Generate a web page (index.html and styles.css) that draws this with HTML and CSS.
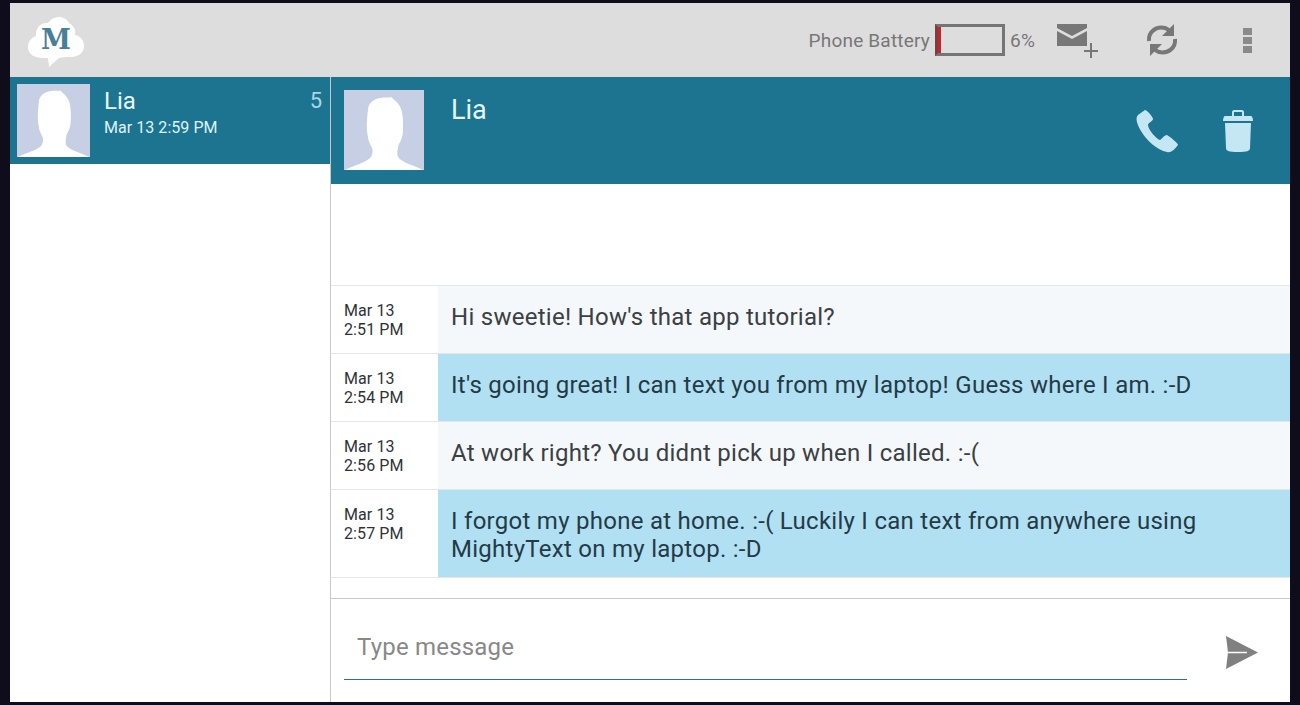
FILE: index.html
```html
<!DOCTYPE html>
<html lang="en">
<head>
    <meta charset="UTF-8">
    <meta name="viewport" content="width=device-width, initial-scale=1.0">
    <title>MightyText</title>
    <link rel="stylesheet" href="styles.css">
</head>
<body>
    <div class="app">
        <div class="topbar">
            <svg class="logo" width="60" height="56" viewBox="0 0 60 56">
                <path class="logo-cloud" d="M17 44C8 44 2 40 2 33C2 28 5 24 10 22C9 14 15 8 22 9C27 1 39 1 43 9C48 12 50 16 49 21C55 22 58 27 58 32C58 39 52 43 45 43C40 43 37 43 33 44L23 53L22 44Z"/>
                <text class="logo-m" x="30" y="35" text-anchor="middle">M</text>
            </svg>
            <div class="status">
                <span class="battery-label">Phone Battery</span>
                <div class="battery"><div class="battery-fill"></div></div>
                <span class="battery-pct">6%</span>
                <svg class="icon-compose" width="44" height="38" viewBox="0 0 44 38">
                    <path d="M1 2H31V6L16 14L1 6Z"/>
                    <path d="M1 9L16 17L31 9V24H1Z"/>
                    <path class="plus" d="M35 21V36M28 29H42"/>
                </svg>
                <svg class="icon-sync" width="32" height="34" viewBox="0 0 32 34">
                    <path class="sync-arc" d="M3 18C2 9 10 3 19 5L23 7"/>
                    <path d="M28 1V13H16Z"/>
                    <path class="sync-arc" d="M29 16C30 25 22 31 13 29L9 27"/>
                    <path d="M4 33V21H16Z"/>
                </svg>
                <div class="more"><i></i><i></i><i></i></div>
            </div>
        </div>
        <div class="main">
            <div class="sidebar">
                <div class="contact">
                    <svg class="avatar avatar-small" viewBox="0 0 80 80">
                        <rect width="80" height="80" fill="#c6cfe3"/>
                        <path fill="#fff" d="M1 80C10 75 22 73 27 67C29 63 29 60 28 58C26 54 24 50 24 47C22 38 23 28 24 20C24 13 30 9 36 8C40 7 46 8 48 7C48 9 52 10 55 15C58 19 59 26 59 34C59 40 59 44 58 47C57 52 54 54 54 58C53 62 53 64 54 67C58 73 70 75 79 80Z"/>
                    </svg>
                    <div class="contact-info">
                        <div class="contact-name">Lia</div>
                        <div class="contact-time">Mar 13 2:59 PM</div>
                    </div>
                    <div class="contact-count">5</div>
                </div>
            </div>
            <div class="thread">
                <div class="thread-head">
                    <svg class="avatar avatar-big" viewBox="0 0 80 80">
                        <rect width="80" height="80" fill="#c6cfe3"/>
                        <path fill="#fff" d="M1 80C10 75 22 73 27 67C29 63 29 60 28 58C26 54 24 50 24 47C22 38 23 28 24 20C24 13 30 9 36 8C40 7 46 8 48 7C48 9 52 10 55 15C58 19 59 26 59 34C59 40 59 44 58 47C57 52 54 54 54 58C53 62 53 64 54 67C58 73 70 75 79 80Z"/>
                    </svg>
                    <div class="thread-name">Lia</div>
                    <svg class="icon-call" width="44" height="44" viewBox="0 0 44 44">
                        <path d="M10 1L3 6C0 9 2 15 6 22C12 32 22 41 32 43C36 44 39 41 43 36C43 34 34 27 32 26C29 26 27 30 25 31C21 30 13 20 13 16C13 14 18 12 18 10C18 8 12 1 10 1Z"/>
                    </svg>
                    <svg class="icon-trash" width="32" height="44" viewBox="0 0 32 44">
                        <path d="M10 7V3C10 2 11 1 12 1H20C21 1 22 2 22 3V7H29C30 7 31 9 31 12H1C1 9 2 7 3 7ZM12 7H20V3H12Z"/>
                        <path d="M3 14H29L28 39C28 42 25 43 16 43C7 43 4 42 4 39Z"/>
                    </svg>
                </div>
                <div class="messages">
                    <div class="message">
                        <div class="message-time">Mar 13<br>2:51 PM</div>
                        <div class="message-text">Hi sweetie! How's that app tutorial?</div>
                    </div>
                    <div class="message message-out">
                        <div class="message-time">Mar 13<br>2:54 PM</div>
                        <div class="message-text">It's going great! I can text you from my laptop! Guess where I am. :-D</div>
                    </div>
                    <div class="message">
                        <div class="message-time">Mar 13<br>2:56 PM</div>
                        <div class="message-text">At work right? You didnt pick up when I called. :-(</div>
                    </div>
                    <div class="message message-out message-tall">
                        <div class="message-time">Mar 13<br>2:57 PM</div>
                        <div class="message-text">I forgot my phone at home. :-( Luckily I can text from anywhere using MightyText on my laptop. :-D</div>
                    </div>
                </div>
                <div class="composer">
                    <div class="composer-input">Type message</div>
                    <svg class="icon-send" width="34" height="34" viewBox="0 0 34 34">
                        <path d="M1 0L33 16.500L1 33L3 16.500Z"/>
                        <path class="send-line" d="M3 16.500H22"/>
                    </svg>
                </div>
            </div>
        </div>
    </div>
</body>
</html>
```

FILE: styles.css
```css
html, body {
    height: 100%;
}
body {
    margin: 0;
    background-color: #0f0d1c;
    font-family: Roboto, 'Liberation Sans', sans-serif;
    overflow: hidden;
}
.app {
    box-sizing: border-box;
    width: 1280px;
    height: 699px;
    margin: 3px 0 0 10px;
    background-color: #fff;
    display: flex;
    flex-direction: column;
}
.topbar {
    height: 74px;
    flex: none;
    background-color: #dedddd;
    display: flex;
    align-items: center;
    justify-content: space-between;
}
.logo {
    margin: 4px 0 0 16px;
}
.logo-cloud {
    fill: #fff;
}
.logo-m {
    font-family: 'DejaVu Serif', 'Liberation Serif', serif;
    font-weight: bold;
    font-size: 27px;
    fill: #4a7f98;
}
.status {
    display: flex;
    align-items: center;
    color: #777;
    font-size: 19px;
    letter-spacing: 0.2px;
}
.battery-label {
    margin-right: 5px;
}
.battery {
    box-sizing: border-box;
    width: 70px;
    height: 32px;
    border: 3px solid #757575;
    border-left-color: #7a3f45;
    margin-right: 5px;
}
.battery-fill {
    width: 3px;
    height: 100%;
    background-color: #c8232c;
}
.battery-pct {
    margin-right: 21px;
}
.icon-compose {
    fill: #777;
    margin: 2px 46px 0 0;
}
.plus {
    fill: none;
    stroke: #777;
    stroke-width: 2;
}
.icon-sync {
    fill: #777;
    margin-right: 65px;
}
.sync-arc {
    fill: none;
    stroke: #777;
    stroke-width: 4;
}
.more {
    display: flex;
    flex-direction: column;
    gap: 2px;
    margin-right: 38px;
}
.more i {
    display: block;
    width: 9px;
    height: 7px;
    background-color: #8a8a8a;
}
.main {
    flex: 1;
    display: flex;
    min-height: 0;
}
.sidebar {
    width: 320px;
    flex: none;
    border-right: 1px solid #c8c8c8;
}
.contact {
    height: 87px;
    background-color: #1c7490;
    display: flex;
    align-items: flex-start;
    color: #fff;
}
.avatar {
    display: block;
    flex: none;
}
.avatar-small {
    width: 73px;
    height: 73px;
    margin: 7px 14px 0 7px;
}
.contact-info {
    flex: 1;
    padding-top: 10px;
}
.contact-name {
    font-size: 24px;
    line-height: 29px;
    color: #e6f7fb;
}
.contact-time {
    font-size: 16px;
    line-height: 24px;
    letter-spacing: 0.05px;
    color: #dff3f8;
}
.contact-count {
    font-size: 22px;
    line-height: 26px;
    margin: 11px 8px 0 0;
    color: #a9d6e4;
}
.thread {
    flex: 1;
    display: flex;
    flex-direction: column;
    min-width: 0;
}
.thread-head {
    height: 107px;
    flex: none;
    background-color: #1c7490;
    display: flex;
    align-items: flex-start;
}
.avatar-big {
    width: 80px;
    height: 80px;
    margin: 13px 27px 0 13px;
}
.thread-name {
    flex: 1;
    font-size: 27px;
    line-height: 32px;
    padding-top: 17px;
    color: #e6f7fb;
}
.icon-call {
    fill: #c5e6f3;
    margin: 32px 43px 0 0;
}
.icon-trash {
    fill: #c5e6f3;
    margin: 32px 36px 0 0;
}
.messages {
    margin-top: 101px;
    border-top: 1px solid #e4e6e8;
}
.message {
    display: flex;
    height: 67px;
    border-bottom: 1px solid #e4e6e8;
}
.message-tall {
    height: 87px;
}
.message-time {
    box-sizing: border-box;
    width: 107px;
    flex: none;
    padding: 15px 0 0 13px;
    font-size: 16px;
    line-height: 19px;
    letter-spacing: 0.1px;
    color: #2f3336;
}
.message-text {
    flex: 1;
    padding: 17px 13px 0;
    font-size: 24px;
    line-height: 28px;
    letter-spacing: 0.27px;
    color: #3b4044;
    background-color: #f5f8fa;
}
.message-out .message-text {
    background-color: #b1e0f3;
    color: #243a46;
}
.composer {
    margin-top: 20px;
    flex: 1;
    border-top: 1px solid #c8c8c8;
    position: relative;
}
.composer-input {
    box-sizing: border-box;
    width: 843px;
    height: 81px;
    margin-left: 13px;
    padding: 33px 0 0 13px;
    border-bottom: 1px solid #2f7572;
    font-size: 24px;
    line-height: 30px;
    letter-spacing: 0.2px;
    color: #888;
}
.icon-send {
    position: absolute;
    left: 894px;
    top: 37px;
    fill: #808080;
}
.send-line {
    fill: none;
    stroke: #fff;
    stroke-width: 1.500;
}
```
